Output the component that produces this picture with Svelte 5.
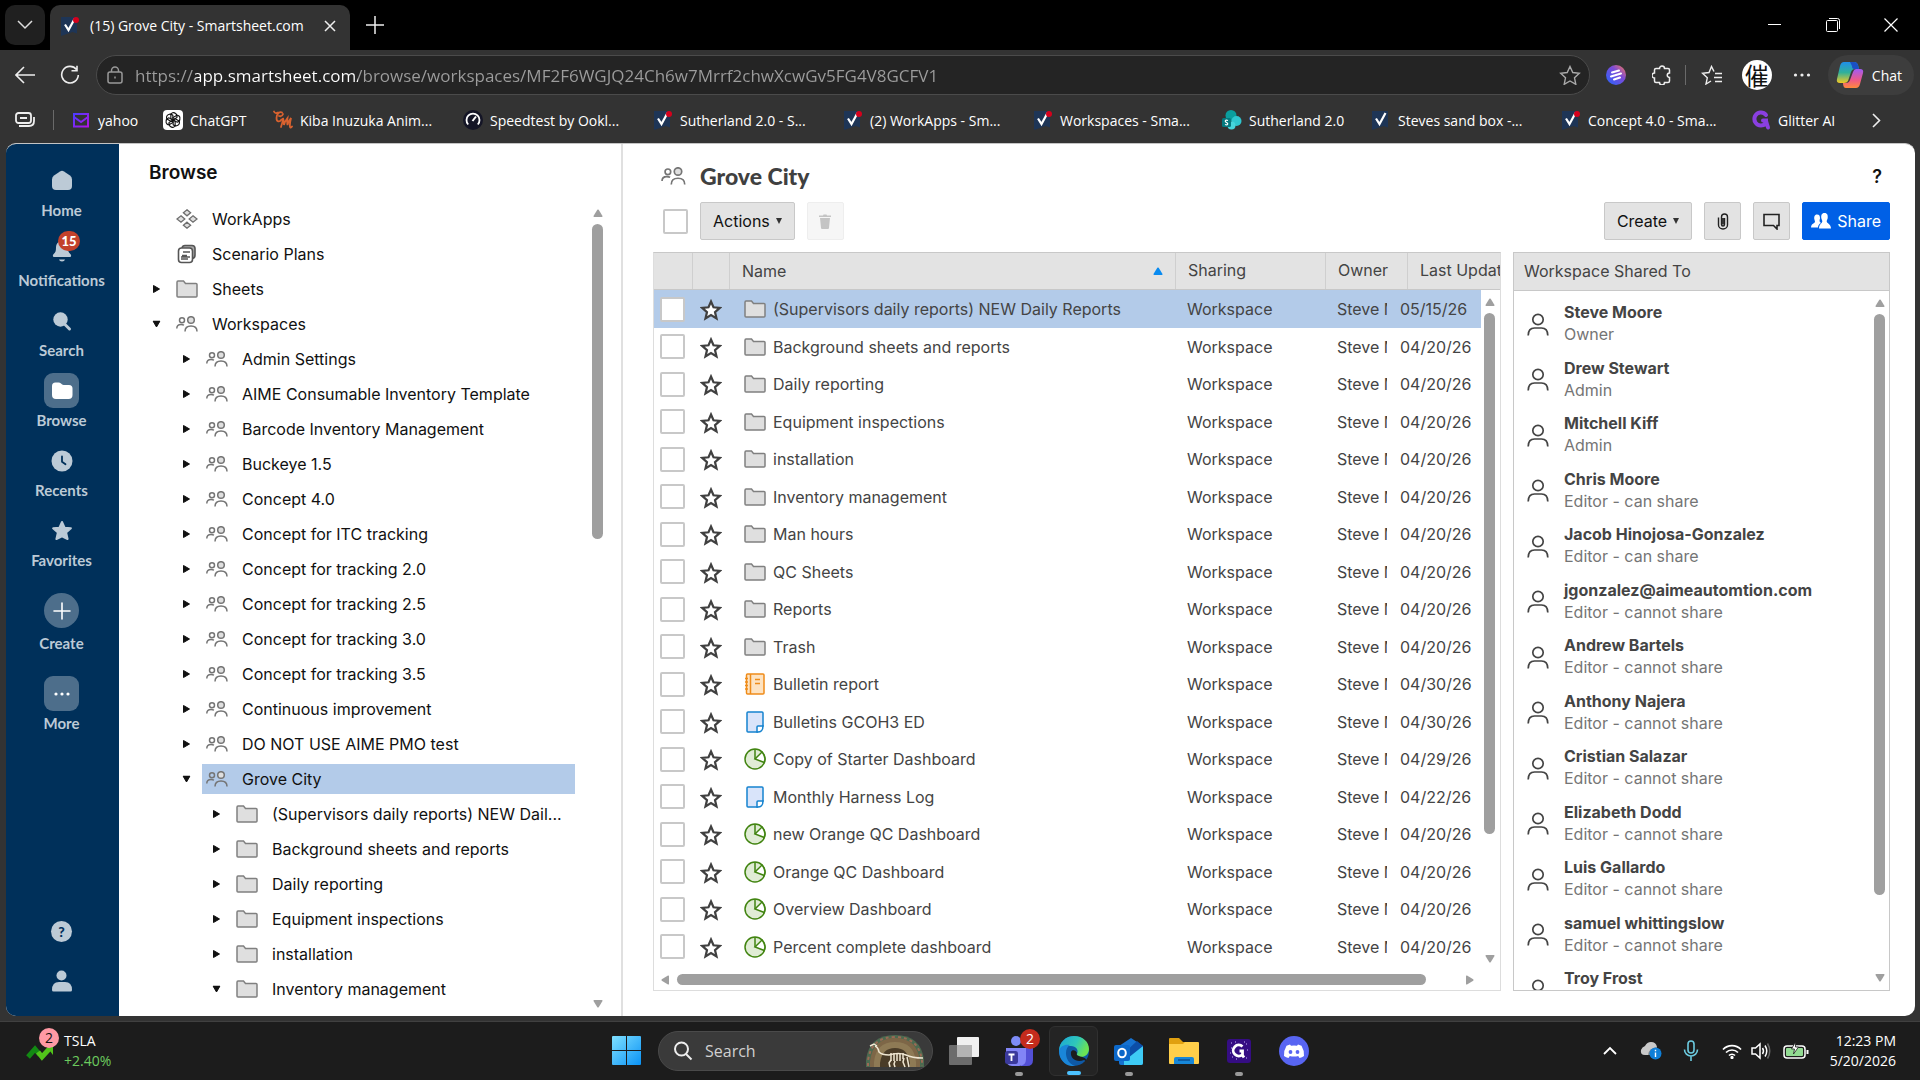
<script lang="ts">
  type TreeRow = { label: string; icon: string; level: number; arrow?: string; selected?: boolean };

  const url =
    "https://app.smartsheet.com/browse/workspaces/MF2F6WGJQ24Ch6w7Mrrf2chwXcwGv5FG4V8GCFV1";

  const bookmarks = [
    { icon: "yahoo", label: "yahoo", width: 92 },
    { icon: "chatgpt", label: "ChatGPT", width: 110 },
    { icon: "cm", label: "Kiba Inuzuka Anim...", width: 190 },
    { icon: "speed", label: "Speedtest by Ookl...", width: 190 },
    { icon: "sheetDot", label: "Sutherland 2.0 - S...", width: 190 },
    { icon: "sheetDot", label: "(2) WorkApps - Sm...", width: 190 },
    { icon: "sheetDot", label: "Workspaces - Sma...", width: 189 },
    { icon: "sharepoint", label: "Sutherland 2.0", width: 149 },
    { icon: "sheetTab", label: "Steves sand box -...", width: 190 },
    { icon: "sheetDot", label: "Concept 4.0 - Sma...", width: 190 },
    { icon: "glitter", label: "Glitter AI", width: 90 },
  ];

  const nav = [
    { icon: "home", label: "Home" },
    { icon: "bell", label: "Notifications", badge: 15 },
    { icon: "search", label: "Search" },
    { icon: "browse", label: "Browse", active: true },
    { icon: "recents", label: "Recents" },
    { icon: "favorites", label: "Favorites" },
  ];

  const workspaces = (names: string[]): TreeRow[] =>
    names.map((label) => ({ label, icon: "people", level: 1, arrow: "right" }));

  const folders = (names: string[]): TreeRow[] =>
    names.map((label) => ({ label, icon: "folder", level: 2, arrow: "right" }));

  const tree: TreeRow[] = [
    { label: "WorkApps", icon: "workapps", level: 0 },
    { label: "Scenario Plans", icon: "plans", level: 0 },
    { label: "Sheets", icon: "folder", level: 0, arrow: "right" },
    { label: "Workspaces", icon: "people", level: 0, arrow: "down" },
    ...workspaces([
      "Admin Settings",
      "AIME Consumable Inventory Template",
      "Barcode Inventory Management",
      "Buckeye 1.5",
      "Concept 4.0",
      "Concept for ITC tracking",
      "Concept for tracking 2.0",
      "Concept for tracking 2.5",
      "Concept for tracking 3.0",
      "Concept for tracking 3.5",
      "Continuous improvement",
      "DO NOT USE AIME PMO test",
    ]),
    { label: "Grove City", icon: "people", level: 1, arrow: "down", selected: true },
    ...folders([
      "(Supervisors daily reports) NEW Dail...",
      "Background sheets and reports",
      "Daily reporting",
      "Equipment inspections",
      "installation",
    ]),
    { label: "Inventory management", icon: "folder", level: 2, arrow: "down" },
  ];

  const items = [
    { name: "(Supervisors daily reports) NEW Daily Reports", icon: "folder", date: "05/15/26" },
    { name: "Background sheets and reports", icon: "folder", date: "04/20/26" },
    { name: "Daily reporting", icon: "folder", date: "04/20/26" },
    { name: "Equipment inspections", icon: "folder", date: "04/20/26" },
    { name: "installation", icon: "folder", date: "04/20/26" },
    { name: "Inventory management", icon: "folder", date: "04/20/26" },
    { name: "Man hours", icon: "folder", date: "04/20/26" },
    { name: "QC Sheets", icon: "folder", date: "04/20/26" },
    { name: "Reports", icon: "folder", date: "04/20/26" },
    { name: "Trash", icon: "folder", date: "04/20/26" },
    { name: "Bulletin report", icon: "report", date: "04/30/26" },
    { name: "Bulletins GCOH3 ED", icon: "sheet", date: "04/30/26" },
    { name: "Copy of Starter Dashboard", icon: "dashboard", date: "04/29/26" },
    { name: "Monthly Harness Log", icon: "sheet", date: "04/22/26" },
    { name: "new Orange QC Dashboard", icon: "dashboard", date: "04/20/26" },
    { name: "Orange QC Dashboard", icon: "dashboard", date: "04/20/26" },
    { name: "Overview Dashboard", icon: "dashboard", date: "04/20/26" },
    { name: "Percent complete dashboard", icon: "dashboard", date: "04/20/26" },
  ];

  const people = [
    { name: "Steve Moore", role: "Owner" },
    { name: "Drew Stewart", role: "Admin" },
    { name: "Mitchell Kiff", role: "Admin" },
    { name: "Chris Moore", role: "Editor - can share" },
    { name: "Jacob Hinojosa-Gonzalez", role: "Editor - can share" },
    { name: "jgonzalez@aimeautomtion.com", role: "Editor - cannot share" },
    { name: "Andrew Bartels", role: "Editor - cannot share" },
    { name: "Anthony Najera", role: "Editor - cannot share" },
    { name: "Cristian Salazar", role: "Editor - cannot share" },
    { name: "Elizabeth Dodd", role: "Editor - cannot share" },
    { name: "Luis Gallardo", role: "Editor - cannot share" },
    { name: "samuel whittingslow", role: "Editor - cannot share" },
    { name: "Troy Frost", role: "" },
  ];

  const apps = [
    { icon: "taskview", label: "Task view" },
    { icon: "teams", label: "Teams", badge: 2, running: true },
    { icon: "edge", label: "Edge", active: true },
    { icon: "outlook", label: "Outlook", running: true },
    { icon: "explorer", label: "File Explorer" },
    { icon: "glitterApp", label: "Glitter AI", running: true },
    { icon: "discord", label: "Discord" },
  ];
</script>

{#snippet glyph(name: string)}
  {#if name === "sheetDot" || name === "sheetTab"}
    <svg width="20" height="20" viewBox="0 0 20 20">
      <path d="M1 1h16v16.500L12.500 16 1 20z" fill="#1e3556" />
      <path d="M5 8.500 8.500 14 14.500 3" fill="none" stroke="#fff" stroke-width="2.200" />
      {#if name === "sheetDot"}<circle cx="16" cy="4" r="3" fill="#d6001c" />{/if}
    </svg>
  {:else if name === "yahoo"}
    <svg width="20" height="20" viewBox="0 0 20 20" fill="none" stroke-width="2">
      <defs>
        <linearGradient id="yh" x1="0" y1="0" x2="1" y2="1">
          <stop offset="0" stop-color="#4d3bff" />
          <stop offset="1" stop-color="#b312e6" />
        </linearGradient>
      </defs>
      <path d="M3 4h14v12.500H3zM3 7l7 5 7-5" stroke="url(#yh)" />
    </svg>
  {:else if name === "chatgpt"}
    <svg width="20" height="20" viewBox="0 0 20 20">
      <rect width="20" height="20" rx="4" fill="#fff" />
      <g fill="none" stroke="#111" stroke-width="1.100">
        {#each [0, 60, 120, 180, 240, 300] as a}
          <path d="M7.500 5a3 3 0 0 1 5-1.500q2 1 1.500 4L10 10V7.500l3.500-2" transform="rotate({a} 10 10)" />
        {/each}
      </g>
    </svg>
  {:else if name === "cm"}
    <svg width="20" height="20" viewBox="0 0 20 20" fill="none" stroke="#d9622f" stroke-width="1.800" stroke-linecap="round">
      <path d="M1 1.500Q2 4 5 2.500M9 2.500C7 1 3.500 4 3.500 8s3 4.500 5 1.500M6 6q3 1 4-2" />
      <path d="M8 17q1.500-4 2-9 1 4 1 7 1-4 3.500-7-.5 4 0 7 1-4 3.500-7-1.500 6-1 9 .5 1.500 2-.5" />
    </svg>
  {:else if name === "speed"}
    <svg width="20" height="20" viewBox="0 0 20 20" fill="none">
      <circle cx="10" cy="10" r="10" fill="#141526" />
      <path d="M5.200 14.500a6.500 6.500 0 1 1 9.600 0" stroke="#fff" stroke-width="1.800" />
      <path d="m9.500 11 3.500-4.500" stroke="#fff" stroke-width="2" />
    </svg>
  {:else if name === "sharepoint"}
    <svg width="20" height="20" viewBox="0 0 20 20">
      <circle cx="9" cy="5.500" r="5.500" fill="#0a9e9e" />
      <circle cx="14.500" cy="11" r="5" fill="#2fc6cf" />
      <circle cx="9.500" cy="15.500" r="4" fill="#46d5dc" />
      <rect x="0" y="8" width="9" height="9" rx="1.500" fill="#05797f" />
      <path d="M6 10.500c-3-1-3.500 1-1.500 2s1.500 3-1.500 2" fill="none" stroke="#fff" stroke-width="1.200" />
    </svg>
  {:else if name === "glitter"}
    <svg width="20" height="20" viewBox="0 0 20 20" fill="none" stroke="#8a3fe0" stroke-width="4" stroke-linecap="round">
      <path d="M15 5A6.500 6.500 0 1 0 10 15.500c3.500 0 5-2 5-5h-3M15 11l2 6.500" />
    </svg>
  {:else if name === "home"}
    <svg width="22" height="22" viewBox="0 0 22 22" fill="currentColor">
      <path d="M9 1.500q2-1.300 4 0l6 4q2 1.500 2 4v6.500q0 4-4 4H5q-4 0-4-4V9.500q0-2.500 2-4z" />
    </svg>
  {:else if name === "bell"}
    <svg width="22" height="24" viewBox="0 0 22 24" fill="currentColor">
      <path d="M11 2c4 0 6 3 6 6.500 0 3.500.5 5 2.300 6.500 1.500 1.400.9 3-.8 3h-15c-1.700 0-2.300-1.600-.8-3C4.500 13.500 5 12 5 8.500 5 5 7 2 11 2z" />
      <path d="M8 20.500h6q-.5 2-3 2t-3-2z" />
    </svg>
  {:else if name === "search"}
    <svg width="22" height="22" viewBox="0 0 22 22">
      <circle cx="9.500" cy="9.500" r="7.200" fill="currentColor" />
      <path d="m13.500 14 5 5" stroke="currentColor" stroke-width="3" stroke-linecap="round" />
    </svg>
  {:else if name === "browse"}
    <svg width="22" height="22" viewBox="0 0 22 22" fill="#fff">
      <path d="M1 6q0-3.500 3.500-3.500h3q1.500 0 2.500 1T12.500 5H18q3.500 0 3.500 3.500v6.500q0 4-4 4H5q-4 0-4-4z" />
    </svg>
  {:else if name === "recents"}
    <svg width="22" height="22" viewBox="0 0 22 22" fill="none">
      <circle cx="11" cy="11" r="10.500" fill="currentColor" />
      <path d="M11 6.500v5.200l3.500 2.500" stroke="#00305a" stroke-width="1.800" stroke-linecap="round" />
    </svg>
  {:else if name === "favorites"}
    <svg width="22" height="22" viewBox="0 0 22 22">
      <path d="m11 2 2.600 5.700 6.300.6-4.800 4.300 1.500 6.400-5.600-2.700L5.400 19l1.500-6.400-4.800-4.300 6.300-.6z" fill="currentColor" stroke="currentColor" stroke-width="2" stroke-linejoin="round" />
    </svg>
  {:else if name === "folder"}
    <svg width="22" height="18" viewBox="0 0 22 18">
      <path d="M1 2.200Q1 1 2 1h5.500l2 2.500H20q1 0 1 1V16q0 1-1 1H2q-1 0-1-1z" fill="#dfdfdf" stroke="#808080" stroke-width="1.500" />
    </svg>
  {:else if name === "people"}
    <svg class="people" width="22" height="16" viewBox="0 0 22 16" fill="none" stroke="#757575" stroke-width="1.500">
      <circle cx="6" cy="4.300" r="2.500" />
      <circle cx="15" cy="4" r="3.300" fill="#dfdfdf" />
      <path d="M.8 12.500c0-3 2-4 4.200-4 1 0 2 .2 3 .7M9 15.500c0-3.800 2-5.500 6-5.500s6 1.700 6 5.500" />
    </svg>
  {:else if name === "workapps"}
    <svg width="22" height="20" viewBox="0 0 22 20" fill="#dfdfdf" stroke="#6f6f6f" stroke-width="1.300">
      <path d="m11 .8 3.600 3L11 6.800l-3.600-3zM5 6.800l3.800 3.200L5 13.200 1 10zM17 6.800l4 3.200-4 3.200-3.800-3.200zM11 13.200l3.600 3-3.600 3-3.600-3z" />
    </svg>
  {:else if name === "plans"}
    <svg width="22" height="20" viewBox="0 0 22 20" fill="none" stroke="#555" stroke-width="1.600">
      <path d="M6 4q.5-2.500 3-2.500h7q3 0 3 3V11q0 3-2.500 3.500" fill="#aaa" />
      <rect x="2.500" y="4" width="14" height="14.500" rx="3" fill="#fff" />
      <path d="M7 8h7M6 11.500h5M5 15h7M5 13h9" stroke-width="1.500" />
    </svg>
  {:else if name === "report"}
    <svg width="22" height="22" viewBox="0 0 22 22" fill="none" stroke="#ef8c1a" stroke-width="1.500">
      <rect x="2.500" y="1" width="17.500" height="20" rx="1" fill="#fde3c2" />
      <path d="M6.500 1v20M11 6.500h5M11 10.500h5M1 5.500h3M1 9h3M1 12.500h3M1 16h3" />
    </svg>
  {:else if name === "sheet"}
    <svg width="22" height="22" viewBox="0 0 22 22" stroke="#1683cf" stroke-width="1.500">
      <path d="M3 2q0-1 1-1h14q1 0 1 1v13l-5.500 6H4q-1 0-1-1z" fill="#d9e4fa" />
      <path d="M19 15h-5q-1 0-1 1v5q6 .5 6-6z" fill="#fff" />
    </svg>
  {:else if name === "dashboard"}
    <svg width="22" height="22" viewBox="0 0 22 22" stroke="#418410" stroke-width="1.500">
      <circle cx="11" cy="11" r="10" fill="#e0ecd5" />
      <path d="M11 11l7-7q2.500 3 3 7l-.8 3.500z" fill="#fff" />
      <path d="M11 1v10" fill="none" />
    </svg>
  {:else if name === "taskview"}
    <svg width="30" height="30" viewBox="0 0 30 30">
      <rect x="0" y="9" width="23" height="20" rx="1" fill="#6c6c6c" />
      <rect x="8" y="1" width="22" height="20" rx="1" fill="#f0f0f0" />
      <rect x="8" y="9" width="15" height="12" fill="#b4b4b4" />
    </svg>
  {:else if name === "teams"}
    <svg width="30" height="30" viewBox="0 0 30 30">
      <circle cx="12" cy="5" r="5" fill="#7e8cf7" />
      <path d="M17 12h12v12q0 6-6 6h-6z" fill="#5350d6" />
      <path d="M2 12h20v11q0 7-7 7H8q-6 0-6-7z" fill="#8285f6" />
      <rect x="1" y="15" width="13" height="13" rx="2.500" fill="#3b3a9c" />
      <path d="M4.500 18.500h6M7.500 18.500v6.500" stroke="#fff" stroke-width="1.800" />
    </svg>
  {:else if name === "edge"}
    <svg width="30" height="30" viewBox="0 0 30 30">
      <defs>
        <linearGradient id="eg" x1="0" y1="0" x2="1" y2=".4">
          <stop offset="0" stop-color="#1ba5d8" />
          <stop offset=".6" stop-color="#2fc7ba" />
          <stop offset="1" stop-color="#6be354" />
        </linearGradient>
      </defs>
      <circle cx="15" cy="15" r="15" fill="#0f59a5" />
      <path d="M0 15C0 6 7 0 15 0c9 0 15 6 15 13 0 5-4 8-8 8-3 0-5-1-4-3 2-4-1-8-6-8-6 0-12 2-12 8z" fill="url(#eg)" />
      <path d="M0 15c1-5 6-7 11-6-6 3-6 17 5 21C7 31 0 24 0 15z" fill="#1a86d9" />
      <path d="M12 16c-1 7 6 11 13 8l2 1c1-3-4-4-7-5-2-.5-3-2-2-3-1-3-5-4-6-1z" fill="#1c1c1c" />
    </svg>
  {:else if name === "outlook"}
    <svg width="30" height="30" viewBox="0 0 30 30">
      <path d="M5 10 17 2l12 8v17q0 2-2 2H7q-2 0-2-2z" fill="#1672d0" />
      <path d="m10 20 19-10v17q0 2-2 2H10z" fill="#3ecbf5" />
      <path d="m9 18 14-13 6 5-15 12z" fill="#0c4ea8" />
      <rect x="0" y="9" width="16" height="16" rx="2" fill="#0c68c9" />
      <ellipse cx="8" cy="17" rx="3.800" ry="4.300" fill="none" stroke="#fff" stroke-width="2" />
    </svg>
  {:else if name === "explorer"}
    <svg width="30" height="30" viewBox="0 0 30 30">
      <path d="M0 3q0-1 1-1h9l4 4h15v12H0z" fill="#e0a010" />
      <path d="M0 8h14l2-2h13q1 0 1 1v20q0 1-1 1H1q-1 0-1-1z" fill="#ffcf4a" />
      <path d="M5 28v-5q0-2 2-2h16q2 0 2 2v5z" fill="#1787d9" />
      <path d="M9 24h12" stroke="#0d4f92" stroke-width="1.500" />
    </svg>
  {:else if name === "glitterApp"}
    <svg width="24" height="24" viewBox="0 0 24 24" fill="none">
      <rect width="24" height="24" rx="3" fill="#350d83" />
      <path d="M15.500 7.500a5.500 5.500 0 1 0 0 8v-3.500h-3M15 15.500l2 3" stroke="#fff" stroke-width="2.800" />
      <path d="M4 4h1M8 3h1M19 5h1M4 9h1M20 11h1M5 18h1M9 20h1M19 19h1M17 3h1M3 14h1" stroke="#c9b5ff" stroke-width="1.200" />
    </svg>
  {:else if name === "discord"}
    <svg width="30" height="30" viewBox="0 0 30 30">
      <circle cx="15" cy="15" r="15" fill="#5865f2" />
      <path d="m11 8.500 1 1.200q3-.6 6 0l1-1.200 3.500 1.300q3 5 2.500 10.200-2 1.500-4.500 2l-1.300-2q-4.200 1-8.400 0L9.500 22Q7 21.500 5 20q-.5-5.200 2.500-10.200z" fill="#fff" />
      <ellipse cx="11.500" cy="16" rx="1.900" ry="2.100" fill="#5865f2" />
      <ellipse cx="18.500" cy="16" rx="1.900" ry="2.100" fill="#5865f2" />
    </svg>
  {/if}
{/snippet}

{#snippet triangle(dir: string)}
  <svg class="tri {dir}" width="10" height="8" viewBox="0 0 10 8">
    <path d="M4.300.8Q5 0 5.700.8L9.500 7q.3 1-.8 1H1.300q-1.100 0-.8-1z" fill="currentColor" />
  </svg>
{/snippet}

{#snippet scrollbar(size: number)}
  <div class="vscroll">
    {@render triangle("up")}
    <div class="track"><div class="thumb" style="height: {size}%"></div></div>
    {@render triangle("down")}
  </div>
{/snippet}

<div class="window">
  <div class="tabstrip">
    <button class="tab-search" aria-label="Search tabs">
      <svg width="16" height="10" viewBox="0 0 16 10"><path d="m1 1 7 7 7-7" fill="none" stroke="#ddd" stroke-width="1.500" /></svg>
    </button>
    <div class="tab">
      {@render glyph("sheetDot")}
      <span class="tab-title">(15) Grove City - Smartsheet.com</span>
      <button aria-label="Close tab">
        <svg width="12" height="12" viewBox="0 0 12 12"><path d="m1 1 10 10M11 1 1 11" stroke="#eee" stroke-width="1.500" /></svg>
      </button>
    </div>
    <button class="new-tab" aria-label="New tab">
      <svg width="18" height="18" viewBox="0 0 18 18"><path d="M9 0v18M0 9h18" stroke="#eee" stroke-width="1.500" /></svg>
    </button>
    <div class="window-controls">
      <button aria-label="Minimize">
        <svg width="14" height="14" viewBox="0 0 14 14"><path d="M0 6.500h13" stroke="#fff" /></svg>
      </button>
      <button aria-label="Restore">
        <svg width="14" height="14" viewBox="0 0 14 14" fill="none" stroke="#fff">
          <rect x=".5" y="2.500" width="11" height="11" rx="1" />
          <path d="M3 .5h8.500q2 0 2 2V11" />
        </svg>
      </button>
      <button aria-label="Close">
        <svg width="14" height="14" viewBox="0 0 14 14"><path d="m.5.5 13 13m0-13-13 13" stroke="#fff" stroke-width="1.200" /></svg>
      </button>
    </div>
  </div>

  <div class="toolbar">
    <button class="tool" aria-label="Back">
      <svg width="20" height="18" viewBox="0 0 20 18"><path d="M20 9H1M9 1 1 9l8 8" fill="none" stroke="#eee" stroke-width="1.600" /></svg>
    </button>
    <button class="tool reload" aria-label="Refresh">
      <svg width="20" height="20" viewBox="0 0 20 20" fill="none" stroke="#eee" stroke-width="1.600"><path d="M16.500 4.500A8.300 8.300 0 1 0 18.300 10M17 .8v5h-5.500" /></svg>
    </button>
    <label class="address">
      <svg width="16" height="18" viewBox="0 0 16 18" fill="none" stroke="#999" stroke-width="1.500">
        <rect x="1" y="6" width="14" height="11" rx="2" />
        <path d="M4.500 6V4.500a3.500 3.500 0 0 1 7 0V6M8 10.500v2" />
      </svg>
      <input type="text" value={url} aria-label="Address" spellcheck="false" />
      <svg width="22" height="20" viewBox="0 0 22 20"><path d="m11 1.500 2.800 6 6.500.8-4.800 4.500 1.300 6.500L11 16l-5.800 3.300 1.300-6.500L1.700 8.300l6.500-.8z" fill="none" stroke="#aaa" stroke-width="1.400" /></svg>
    </label>
    <button class="tool ext" aria-label="Extension">
      <svg width="20" height="20" viewBox="0 0 20 20">
        <defs>
          <linearGradient id="ex" x1="1" y1="0" x2="0" y2="1">
            <stop offset="0" stop-color="#ff7a52" />
            <stop offset=".4" stop-color="#7b4bd8" />
            <stop offset="1" stop-color="#2465ff" />
          </linearGradient>
        </defs>
        <circle cx="10" cy="10" r="10" fill="url(#ex)" />
        <path d="m6 7.500 7-2M5 11.500l10-3M8 14.500l6-2" stroke="#fff" stroke-width="2" stroke-linecap="round" />
      </svg>
    </button>
    <button class="tool" aria-label="Extensions">
      <svg width="20" height="20" viewBox="0 0 20 20"><path d="M4 3.500h3.500a2.500 2.500 0 0 1 5 0H16q1.500 0 1.500 1.500v3a2.200 2.200 0 0 0 0 4.500V16q0 1.500-1.500 1.500h-3.500a2.500 2.500 0 0 1-5 0H4q-1.500 0-1.500-1.500v-3a2.500 2.500 0 0 1 0-5V5q0-1.500 1.500-1.500z" fill="none" stroke="#eee" stroke-width="1.500" /></svg>
    </button>
    <span class="rule"></span>
    <button class="tool" aria-label="Favorites">
      <svg width="22" height="20" viewBox="0 0 22 20" fill="none" stroke="#eee" stroke-width="1.400"><path d="M13 6.500 10.500 1.500l-2.500 6-6.500.8 4.800 4.500L5 19l5-3M14 8.500h7M13 12.500h8M14 16.500h7" /></svg>
    </button>
    <button class="avatar" aria-label="Profile">催</button>
    <button class="tool" aria-label="Settings and more">
      <svg width="18" height="4" viewBox="0 0 18 4" fill="#eee"><circle cx="2.500" cy="2" r="1.600" /><circle cx="9" cy="2" r="1.600" /><circle cx="15.500" cy="2" r="1.600" /></svg>
    </button>
    <button class="chat">
      <svg width="28" height="28" viewBox="0 0 28 28">
        <defs>
          <linearGradient id="ca" x1="0" y1="0" x2="0" y2="1">
            <stop offset="0" stop-color="#1f8fea" />
            <stop offset=".5" stop-color="#30b09a" />
            <stop offset="1" stop-color="#f4ca23" />
          </linearGradient>
          <linearGradient id="cb" x1="0" y1="0" x2="0" y2="1">
            <stop offset="0" stop-color="#a05bf5" />
            <stop offset=".6" stop-color="#f05a85" />
            <stop offset="1" stop-color="#ff8a3c" />
          </linearGradient>
        </defs>
        <path d="M8 1h10q3 0 4 3l1 4h-4q-3 0-4 3l-3 9q-1 2-4 2H4q-4 0-3-4L4 5q1-4 4-4z" fill="url(#ca)" />
        <path d="M14 1h4q3 0 4 3l1 4h-5q-2 0-2-3z" fill="#1b50c4" />
        <path d="M20 8h4q4 0 3 4l-3 11q-1 4-4 4H10q-3 0-3-5h3q3 0 4-3l3-8q1-3 3-3z" fill="url(#cb)" />
      </svg>
      Chat
    </button>
  </div>

  <nav class="bookmarks" aria-label="Bookmarks">
    <button class="tool" aria-label="Workspaces">
      <svg width="20" height="16" viewBox="0 0 20 16" fill="none" stroke="#eee" stroke-width="1.800"><rect x="1" y="1" width="15" height="10" rx="2.500" /><path d="M5 6h7M4 14h10q5 0 5-5V5" /></svg>
    </button>
    <span class="rule"></span>
    {#each bookmarks as mark}
      <a href="#{mark.icon}" style="width: {mark.width}px">
        {@render glyph(mark.icon)}
        <span>{mark.label}</span>
      </a>
    {/each}
    <button class="tool more-marks" aria-label="More bookmarks">
      <svg width="9" height="15" viewBox="0 0 9 15"><path d="m1 1 6.500 6.500L1 14" fill="none" stroke="#eee" stroke-width="1.600" /></svg>
    </button>
  </nav>

  <div class="app">
    <nav class="rail" aria-label="Main">
      {#each nav as item}
        <a href="#{item.icon}" class="rail-item">
          <span class="rail-icon" class:active={item.active}>
            {@render glyph(item.icon)}
            {#if item.badge}<b class="badge">{item.badge}</b>{/if}
          </span>
          {item.label}
        </a>
      {/each}
      <button class="rail-item create">
        <span class="rail-icon round">
          <svg width="18" height="18" viewBox="0 0 18 18"><path d="M9 1v16M1 9h16" stroke="#fff" stroke-width="1.600" stroke-linecap="round" /></svg>
        </span>
        Create
      </button>
      <button class="rail-item">
        <span class="rail-icon active">
          <svg width="18" height="4" viewBox="0 0 18 4" fill="#fff"><circle cx="3" cy="2" r="1.600" /><circle cx="9" cy="2" r="1.600" /><circle cx="15" cy="2" r="1.600" /></svg>
        </span>
        More
      </button>
      <div class="rail-foot">
        <button aria-label="Help"><span class="help-dot">?</span></button>
        <button aria-label="Account">
          <svg width="22" height="22" viewBox="0 0 22 22" fill="currentColor">
            <circle cx="10.500" cy="5.500" r="5" />
            <path d="M1 20q0-8 7-8h6q7 0 7 8 0 1.500-1.500 1.500h-17Q1 21.500 1 20z" />
          </svg>
        </button>
      </div>
    </nav>

    <aside class="sidebar">
      <h2>Browse</h2>
      <div class="tree-area">
        <ul class="tree">
          {#each tree as row}
            <li class="level{row.level}">
              <span class="twisty">
                {#if row.arrow}
                  <button class={row.arrow} aria-label="Toggle {row.label}">
                    <svg width="7" height="8" viewBox="0 0 7 8"><path d="M.5.5v7L6.500 4z" fill="#111" stroke="#111" stroke-linejoin="round" /></svg>
                  </button>
                {/if}
              </span>
              <a href="#{row.icon}" class:selected={row.selected}>
                {@render glyph(row.icon)}
                <span>{row.label}</span>
              </a>
            </li>
          {/each}
        </ul>
        {@render scrollbar(41)}
      </div>
    </aside>

    <main>
      <header class="title">
        {@render glyph("people")}
        <h1>Grove City</h1>
        <button class="help" aria-label="Help">?</button>
      </header>

      <div class="actions">
        <input type="checkbox" aria-label="Select all" />
        <button class="btn menu">Actions <i></i></button>
        <button class="btn square" disabled aria-label="Delete">
          <svg width="12" height="15" viewBox="0 0 12 15" fill="#c4c4c4"><path d="M0 1.500h4L4.500.5h3l.5 1h4V3H0zM1 4h10l-1 10q-.2 1-1 1H3q-.8 0-1-1z" /></svg>
        </button>
        <button class="btn menu create-btn">Create <i></i></button>
        <button class="btn square" aria-label="Attachments">
          <svg width="12" height="17" viewBox="0 0 12 17" fill="none" stroke="#222" stroke-width="1.400"><path d="M6 5v6.500M1.500 4.500V12a4.500 4 0 0 0 9 0V4a3 3 0 0 0-6 0v7.500a1.500 1.500 0 0 0 3 0V5" /></svg>
        </button>
        <button class="btn square" aria-label="Comments">
          <svg width="17" height="17" viewBox="0 0 17 17" fill="none" stroke="#222" stroke-width="1.600"><path d="M1 1.500h15v11h-2V16l-3.500-3.500H1z" /></svg>
        </button>
        <button class="btn share">
          <svg width="20" height="16" viewBox="0 0 20 16" fill="#fff">
            <path d="M6 1.500C3.500 1.500 3 4 3.300 6c.2 1.300.7 2 .7 2.800C4 10.500 0 10.500 0 14.500h7q0-3 3-4.500C8 9 8.500 7 9 5.500 9 3 8.500 1.500 6 1.500z" />
            <path d="M13.500 0c-3 0-3.500 2.500-3.200 5 .2 1.500 1 2.300 1 3.300C11.300 10.500 8 11 8 15.500h12c0-4.500-4.300-5-4.300-7.200 0-1 .8-1.800 1-3.300.3-2.500-.2-5-3.200-5z" />
          </svg>
          Share
        </button>
      </div>

      <div class="content">
        <section class="list">
          <table>
            <thead>
              <tr>
                <th aria-label="Select"></th>
                <th aria-label="Favorite"></th>
                <th class="sorted">Name {@render triangle("up")}</th>
                <th>Sharing</th>
                <th>Owner</th>
                <th>Last Updated</th>
              </tr>
            </thead>
            <tbody>
              {#each items as item, i}
                <tr class:selected={i === 0}>
                  <td><input type="checkbox" aria-label="Select {item.name}" /></td>
                  <td>
                    <button class="star" aria-label="Favorite {item.name}">
                      <svg width="22" height="22" viewBox="0 0 22 22"><path d="m11 2.500 2.500 5.800 6.300.6-4.800 4.200 1.500 6.300L11 16l-5.500 3.400L7 13.100 2.200 8.900l6.300-.6z" fill="#fff" stroke="#404040" stroke-width="2.200" /></svg>
                    </button>
                  </td>
                  <td class="name">{@render glyph(item.icon)}<span>{item.name}</span></td>
                  <td class="sharing">Workspace</td>
                  <td class="owner"><span>Steve M</span></td>
                  <td class="date">{item.date}</td>
                </tr>
              {/each}
            </tbody>
          </table>
          {@render scrollbar(82)}
          <div class="hscroll">
            {@render triangle("left")}
            <div class="track"><div class="thumb" style="width: 96%"></div></div>
            {@render triangle("right")}
          </div>
        </section>

        <section class="shared">
          <h3>Workspace Shared To</h3>
          <div class="shared-body">
            <ul>
              {#each people as person}
                <li>
                  <svg width="22" height="23" viewBox="0 0 22 23" fill="none" stroke="#444" stroke-width="1.700">
                    <circle cx="11" cy="6.500" r="5.200" />
                    <path d="M1.200 22.500c0-5 2.500-7.500 6.300-7.500h7c3.800 0 6.300 2.500 6.300 7.500" />
                  </svg>
                  <div>
                    <strong>{person.name}</strong>
                    <span>{person.role}</span>
                  </div>
                </li>
              {/each}
            </ul>
            {@render scrollbar(89)}
          </div>
        </section>
      </div>
    </main>
  </div>

  <footer class="taskbar">
    <button class="stock">
      <span class="stock-icon">
        <svg width="28" height="18" viewBox="0 0 28 18">
          <path d="m2 14 7-8 5 6" fill="none" stroke="#138a13" stroke-width="5" />
          <path d="m12 9 4 5 9-10" fill="none" stroke="#52c41a" stroke-width="5" />
          <path d="M18 0h9v12z" fill="#52c41a" />
        </svg>
        <span class="stock-badge">2</span>
      </span>
      <span class="stock-text">TSLA<em>+2.40%</em></span>
    </button>

    <div class="dock">
      <button class="slot" aria-label="Start">
        <svg width="30" height="30" viewBox="0 0 30 30">
          <defs>
            <linearGradient id="wn" x1="0" y1="0" x2="1" y2="1">
              <stop offset="0" stop-color="#7fe0ff" />
              <stop offset="1" stop-color="#0a92f5" />
            </linearGradient>
          </defs>
          <path d="M1 0h13v14H0V1q0-1 1-1zM15 0h13q1 0 1 1v13H15zM0 15h14v14H1q-1 0-1-1zM15 15h14v13q0 1-1 1H15z" fill="url(#wn)" />
        </svg>
      </button>
      <label class="task-search">
        <svg width="20" height="20" viewBox="0 0 20 20" fill="none" stroke="#eee" stroke-width="2"><circle cx="8.500" cy="8" r="6.500" /><path d="m13 13 5.500 5.500" /></svg>
        <input type="text" placeholder="Search" aria-label="Search" />
        <svg width="60" height="34" viewBox="0 0 60 34" fill="none">
          <path d="M1 33V26Q4 1 30 1t29 25v7z" fill="#4c6a50" />
          <path d="M3 32V27Q6 3 30 3t27 24v5" stroke="#9b6a55" stroke-dasharray="3 3" stroke-width="2" />
          <path d="M5 33V27Q8 4 30 4t25 23v6z" fill="#7d6647" />
          <path d="M9 33V28Q11 8 30 8t21 20v5z" fill="#8e7a55" />
          <path d="M15 33V29Q17 14 30 14t15 15v4z" fill="#4a3c28" />
          <g stroke="#efe6d2" stroke-width="1.500">
            <path d="m5 12 4-2 3 2M10 12q3 1 4 6 3 3 10 3 10-3 17 0 6 3 17 3" />
            <path d="M26 19v8M29 19v8M32 19v8M35 19v8M38 19v6" />
            <path d="m26 26-2 3 1 4M30 27l-1 3 1 3M39 24l-1 4 2 5M42 23l1 5 1 5" />
          </g>
        </svg>
      </label>
      {#each apps as app}
        <button class="slot" class:current={app.active} class:running={app.running} aria-label={app.label}>
          {@render glyph(app.icon)}
          {#if app.badge}<span class="app-badge">{app.badge}</span>{/if}
        </button>
      {/each}
    </div>

    <div class="tray">
      <svg width="14" height="9" viewBox="0 0 14 9"><path d="m1 8 6-6 6 6" fill="none" stroke="#fff" stroke-width="1.800" /></svg>
      <svg class="drive" width="22" height="20" viewBox="0 0 22 20">
        <path d="M5 14Q0 14 1 9q1-3 4-4 2-4 6-4 5 0 6 5v8z" fill="#c9c9c9" />
        <path d="M8 14q0-6 9-8v8z" fill="#858585" />
        <circle cx="15.500" cy="12.500" r="6" fill="#0f7fd8" />
        <path d="M15.500 11.500v4.500M15.500 8.800v1.500" stroke="#fff" stroke-width="1.400" />
      </svg>
      <svg class="mic" width="16" height="22" viewBox="0 0 16 22" fill="none" stroke="#6ccbe0" stroke-width="1.600"><rect x="5" y="1" width="6" height="12" rx="3" /><path d="M1.500 9.500a6.500 6.500 0 0 0 13 0M8 16v5" /></svg>
      <svg width="20" height="16" viewBox="0 0 20 16" fill="none" stroke="#fff" stroke-width="1.700"><path d="M1 6.500a12.500 12.500 0 0 1 18 0M4 9.500a8.500 8.500 0 0 1 12 0M7 12.500a4.200 4.200 0 0 1 6 0" /><circle cx="10" cy="14.500" r=".8" fill="#fff" /></svg>
      <svg class="volume" width="20" height="18" viewBox="0 0 20 18" fill="none" stroke="#fff" stroke-width="1.500"><path d="M1 6v6h3.500l4.500 4V2L4.500 6z" /><path d="M11.500 6q2 3 0 6M14 3.500q3.500 5.500 0 11" /><path d="M16.500 1.500q4.500 7.500 0 15" stroke="#666" /></svg>
      <svg class="battery" width="26" height="18" viewBox="0 0 26 18" fill="none">
        <rect x="1" y="4" width="21" height="12" rx="3" stroke="#fff" stroke-width="1.500" />
        <rect x="3" y="6" width="17" height="8" rx="1" fill="#93dc93" />
        <path d="M24.500 8v4" stroke="#fff" stroke-width="2" />
        <path d="m12.500 0-4 7h3l-1 5 5-7h-3z" fill="#fff" stroke="#1c1c1c" stroke-width=".8" />
      </svg>
      <time>12:23 PM<span>5/20/2026</span></time>
    </div>
  </footer>
</div>

<style>
  :global(body) {
    margin: 0;
    background: #333;
  }

  :global(*) {
    box-sizing: border-box;
  }

  .window {
    display: flex;
    flex-direction: column;
    height: 100vh;
    overflow: hidden;
    background: #333;
    color: #fff;
    font-family: "Open Sans", "Noto Sans", "Noto Sans CJK SC", sans-serif;
    font-size: 14px;
  }

  button {
    padding: 0;
    border: 0;
    background: none;
    color: inherit;
    font: inherit;
    cursor: pointer;
  }

  a {
    color: inherit;
    text-decoration: none;
  }

  svg {
    display: block;
    flex-shrink: 0;
  }

  ul {
    margin: 0;
    padding: 0;
    list-style: none;
  }

  /* browser chrome */
  .tabstrip {
    display: flex;
    align-items: center;
    flex-shrink: 0;
    height: 50px;
    padding-left: 5px;
    background: #000;
  }

  .tab-search {
    display: grid;
    place-items: center;
    width: 40px;
    height: 40px;
    border-radius: 10px;
    background: #202020;
  }

  .tab {
    display: flex;
    align-items: center;
    gap: 10px;
    width: 300px;
    height: 45px;
    margin: 5px 0 0 5px;
    padding: 0 14px 4px 10px;
    border-radius: 10px 10px 0 0;
    background: #333;
  }

  .tab-title {
    flex: 1;
    white-space: nowrap;
  }

  .new-tab {
    margin-left: 16px;
  }

  .window-controls {
    display: flex;
    margin-left: auto;
  }

  .window-controls button {
    display: grid;
    place-items: center;
    width: 58px;
    height: 40px;
  }

  .toolbar {
    display: flex;
    align-items: center;
    flex-shrink: 0;
    height: 50px;
    padding: 0 6px 0 2px;
  }

  .tool {
    display: grid;
    place-items: center;
    flex-shrink: 0;
    width: 46px;
    height: 40px;
  }

  .reload {
    width: 44px;
  }

  .address {
    display: flex;
    align-items: center;
    flex: 1;
    gap: 12px;
    height: 40px;
    margin-left: 4px;
    padding: 0 8px 0 10px;
    border: 1px solid #4b4b4b;
    border-radius: 20px;
    background: #242424;
  }

  .address input {
    flex: 1;
    min-width: 0;
    padding: 0;
    border: 0;
    outline: 0;
    background: linear-gradient(90deg, #9d9d9d 60px, #fff 60px 223px, #9d9d9d 223px);
    background-clip: text;
    -webkit-background-clip: text;
    color: transparent;
    font: inherit;
    font-size: 17px;
  }

  .ext {
    margin-left: 3px;
  }

  .rule {
    width: 1px;
    height: 20px;
    background: #6a6a6a;
  }

  .toolbar .rule {
    margin-right: 3px;
  }

  .avatar {
    flex-shrink: 0;
    width: 30px;
    height: 30px;
    margin: 0 7px;
    border-radius: 50%;
    background: #fff;
    color: #111;
    font-family: "Noto Sans CJK SC", sans-serif;
    font-size: 24px;
    line-height: 28px;
    overflow: hidden;
  }

  .chat {
    display: flex;
    align-items: center;
    gap: 8px;
    height: 40px;
    margin-left: 3px;
    padding: 0 12px 0 8px;
    border-radius: 20px;
    background: #3d3d3d;
  }

  .bookmarks {
    display: flex;
    align-items: center;
    flex-shrink: 0;
    height: 43px;
    padding: 0 21px 3px 2px;
  }

  .bookmarks .rule {
    margin: 0 17px 0 5px;
  }

  .bookmarks a {
    display: flex;
    align-items: center;
    flex-shrink: 0;
    gap: 7px;
    white-space: nowrap;
  }

  .more-marks {
    margin-left: auto;
  }

  /* app frame */
  .app {
    display: flex;
    flex: 1;
    min-height: 0;
    margin: 0 5px 5px 6px;
    border-top: 1px solid #c4c4c4;
    border-radius: 10px;
    background: #fff;
    color: #111;
    font-family: Inter, sans-serif;
    font-size: 16px;
    overflow: hidden;
  }

  .rail {
    display: flex;
    flex-direction: column;
    flex-shrink: 0;
    width: 113px;
    padding: 19px 2px 0 0;
    background: #00305a;
    color: #bccad6;
    font-family: Lato, sans-serif;
    font-size: 15px;
    font-weight: 700;
  }

  .rail-item {
    display: flex;
    flex-direction: column;
    align-items: center;
    flex-shrink: 0;
    gap: 2px;
    height: 70px;
    line-height: 20px;
  }

  .rail-icon {
    display: grid;
    place-items: center;
    position: relative;
    width: 35px;
    height: 35px;
  }

  .rail-icon.active {
    border-radius: 9px;
    background: #4d6e8b;
  }

  .rail-icon.round {
    border-radius: 50%;
    background: #4d6e8b;
  }

  .badge {
    position: absolute;
    top: -2px;
    left: 14px;
    min-width: 22px;
    height: 20px;
    border-radius: 10px;
    background: #c2412c;
    color: #fff;
    font-size: 13px;
    line-height: 20px;
    text-align: center;
  }

  .rail-item.create {
    gap: 5px;
    height: 83px;
    margin-top: 10px;
  }

  .rail-foot {
    display: flex;
    flex-direction: column;
    align-items: center;
    gap: 28px;
    margin-top: auto;
    padding-bottom: 24px;
  }

  .help-dot {
    display: block;
    width: 21px;
    height: 21px;
    border-radius: 50%;
    background: #bccad6;
    color: #00305a;
    font-size: 14px;
    font-weight: 900;
    line-height: 21px;
    text-align: center;
  }

  .sidebar {
    display: flex;
    flex-direction: column;
    flex-shrink: 0;
    width: 504px;
    padding-right: 18px;
    border-right: 2px solid #e0e0e0;
  }

  h2 {
    margin: 0;
    padding: 13px 0 12px 30px;
    font-size: 19px;
    font-weight: 600;
    line-height: 32px;
  }

  .tree-area {
    display: flex;
    flex: 1;
    min-height: 0;
    gap: 17px;
  }

  .tree {
    flex: 1;
    overflow: hidden;
  }

  .tree li {
    display: flex;
    align-items: center;
    height: 35px;
    padding-left: 27px;
  }

  .tree .level1 {
    padding-left: 57px;
  }

  .tree .level2 {
    padding-left: 87px;
  }

  .twisty {
    display: flex;
    justify-content: center;
    width: 26px;
    padding-right: 5px;
  }

  .down svg:not(.tri) {
    transform: rotate(90deg);
  }

  .tree a {
    display: flex;
    align-items: center;
    flex: 1;
    gap: 14px;
    height: 30px;
    padding-left: 4px;
    white-space: nowrap;
  }

  .selected {
    background: #b3cbe9;
  }

  .tri {
    color: #9f9f9f;
  }

  .tri.down {
    transform: rotate(180deg);
  }

  .tri.left {
    transform: rotate(-90deg);
  }

  .tri.right {
    transform: rotate(90deg);
  }

  .vscroll {
    display: flex;
    flex-direction: column;
    align-items: center;
    width: 11px;
    padding: 8px 0;
  }

  .vscroll .track {
    flex: 1;
    width: 11px;
    margin: 7px 0;
  }

  .thumb {
    height: 11px;
    border-radius: 6px;
    background: #9f9f9f;
  }

  main {
    display: flex;
    flex-direction: column;
    flex: 1;
    min-width: 0;
    padding: 6px 25px 25px 30px;
  }

  .title {
    display: flex;
    align-items: center;
    gap: 14px;
    height: 52px;
    padding-left: 8px;
  }

  .title .people {
    width: 25px;
    height: 18px;
  }

  h1 {
    margin: 0;
    color: #404040;
    font-family: Lato, sans-serif;
    font-size: 23px;
    font-weight: 900;
  }

  .help {
    margin-left: auto;
    padding: 0 8px;
    font-size: 18px;
    font-weight: 600;
  }

  .actions {
    display: flex;
    align-items: center;
    gap: 12px;
    padding-left: 10px;
  }

  .actions input {
    margin-right: -2px;
  }

  input[type="checkbox"] {
    appearance: none;
    display: block;
    width: 25px;
    height: 25px;
    margin: 0;
    border: 2px solid #c8c8c8;
    border-radius: 2px;
    background: #fff;
  }

  .btn {
    display: flex;
    align-items: center;
    justify-content: center;
    height: 38px;
    border: 1px solid #c8c8c8;
    border-radius: 2px;
    background: #e3e3e3;
  }

  .menu {
    gap: 6px;
    padding: 0 12px;
  }

  .menu i {
    border: 3px solid transparent;
    border-top: 6px solid #333;
    border-bottom: 0;
  }

  .create-btn {
    margin-left: auto;
  }

  .square {
    width: 37px;
  }

  .btn:disabled {
    border-color: #eee;
    background: #f6f6f6;
  }

  .share {
    gap: 6px;
    padding: 0 8px;
    border-color: #0060e6;
    background: #0060e6;
    color: #fff;
  }

  .content {
    display: flex;
    flex: 1;
    min-height: 0;
    gap: 12px;
    padding-top: 12px;
    color: #444;
  }

  .list {
    display: grid;
    grid-template-columns: minmax(0, 1fr) 20px;
    grid-template-rows: 37px minmax(0, 1fr) 21px;
    flex: 1;
    min-width: 0;
    border: 1px solid #ddd;
    border-top-color: #c8c8c8;
    overflow: hidden;
  }

  table {
    display: flex;
    flex-direction: column;
    grid-area: 1 / 1 / 3 / 3;
    min-height: 0;
    overflow: hidden;
  }

  thead,
  tbody {
    display: block;
  }

  tbody {
    margin-right: 19px;
  }

  tr {
    display: grid;
    align-items: center;
    grid-template-columns: 39px 37px minmax(0, 1fr) 150px 64px 91px;
    height: 38px;
  }

  tbody tr:nth-child(even) {
    height: 37px;
  }

  thead tr {
    grid-template-columns: 39px 37px minmax(0, 1fr) 150px 82px 92px;
    align-items: stretch;
    height: 37px;
    border-bottom: 1px solid #c8c8c8;
    background: #e3e3e3;
  }

  th {
    padding: 0 12px;
    border-right: 1px solid #cfcfcf;
    font-weight: 400;
    line-height: 35px;
    text-align: left;
    white-space: nowrap;
    overflow: hidden;
  }

  th:last-child {
    padding-right: 0;
    border-right: 0;
  }

  .sorted {
    display: flex;
    align-items: center;
    justify-content: space-between;
  }

  .sorted .tri {
    color: #0a8bf0;
  }

  td {
    padding: 0;
    white-space: nowrap;
    overflow: hidden;
  }

  td:first-child {
    padding-left: 6px;
  }

  .star {
    display: block;
    margin: 2px 0 0 7px;
  }

  .name {
    display: flex;
    align-items: center;
    gap: 7px;
    padding-left: 14px;
  }

  .sharing,
  .owner {
    padding-left: 11px;
  }

  .owner span {
    display: block;
    width: 50px;
    overflow: hidden;
  }

  .date {
    padding-left: 10px;
  }

  .list .vscroll {
    grid-area: 2 / 2;
    margin-left: 4px;
    padding: 8px 0 6px;
  }

  .hscroll {
    display: flex;
    align-items: center;
    grid-area: 3 / 1 / 4 / 3;
    padding: 0 25px 0 6px;
  }

  .hscroll .track {
    flex: 1;
    margin: 0 8px 0 7px;
  }

  .shared {
    display: flex;
    flex-direction: column;
    width: 377px;
    border: 1px solid #c8c8c8;
  }

  h3 {
    margin: 0;
    padding-left: 10px;
    border-bottom: 1px solid #c8c8c8;
    background: #e3e3e3;
    font-size: 16px;
    font-weight: 400;
    line-height: 37px;
  }

  .shared-body {
    display: flex;
    flex: 1;
    min-height: 0;
    padding-right: 4px;
  }

  .shared ul {
    flex: 1;
    padding-top: 10px;
    overflow: hidden;
  }

  .shared li {
    display: flex;
    align-items: center;
    gap: 15px;
    height: 55px;
    padding: 0 0 11px 13px;
    line-height: 22px;
  }

  .shared li:nth-child(even) {
    height: 56px;
  }

  .shared li svg {
    margin-top: 2px;
  }

  .shared strong,
  .shared li span {
    display: block;
    min-height: 22px;
  }

  .shared strong {
    font-weight: 700;
  }

  .shared li span {
    color: #757575;
  }

  /* windows taskbar */
  .taskbar {
    display: grid;
    grid-template-columns: 1fr auto 1fr;
    align-items: center;
    flex-shrink: 0;
    height: 59px;
    padding-bottom: 1px;
    border-top: 1px solid #404040;
    background: #1c1c1c;
  }

  .stock {
    display: flex;
    align-items: center;
    gap: 10px;
    padding-left: 26px;
    line-height: 20px;
    text-align: left;
  }

  .stock-icon {
    position: relative;
    padding-top: 2px;
  }

  .stock-badge,
  .app-badge {
    position: absolute;
    width: 20px;
    height: 20px;
    border-radius: 50%;
    line-height: 20px;
    text-align: center;
  }

  .stock-badge {
    top: -13px;
    left: 13px;
    background: #ff99a4;
    color: #111;
  }

  .stock-text em {
    display: block;
    color: #6ccb5f;
    font-style: normal;
  }

  .dock {
    display: flex;
    align-items: center;
  }

  .slot {
    display: grid;
    place-items: center;
    position: relative;
    width: 55px;
    height: 50px;
  }

  .slot.current {
    width: 49px;
    margin: 0 3px;
    border: 1px solid #303030;
    border-radius: 6px;
    background: #242424;
  }

  .slot.current::after,
  .slot.running::after {
    content: "";
    position: absolute;
    bottom: 0;
    width: 8px;
    height: 4px;
    border-radius: 2px;
    background: #9a9a9a;
  }

  .slot.current::after {
    width: 14px;
    background: #4cc2ff;
  }

  .app-badge {
    top: 3px;
    right: 6px;
    background: #c42b1c;
  }

  .task-search {
    display: flex;
    align-items: center;
    gap: 12px;
    width: 275px;
    height: 40px;
    margin: 0 3px 0 4px;
    padding: 0 7px 0 14px;
    border: 1px solid #4a4a4a;
    border-radius: 20px;
    background: #3a3a3a;
  }

  .task-search input {
    flex: 1;
    min-width: 0;
    padding: 0;
    border: 0;
    outline: 0;
    background: none;
    color: #fff;
    font: inherit;
    font-size: 16px;
  }

  .task-search input::placeholder {
    color: #d0d0d0;
  }

  .tray {
    display: flex;
    align-items: center;
    justify-content: flex-end;
    padding-right: 24px;
    line-height: 20px;
  }

  .drive {
    margin: 0 21px 0 23px;
  }

  .mic {
    margin-right: 23px;
  }

  .volume {
    margin-left: 9px;
  }

  .battery {
    margin: 0 17px 0 12px;
  }

  time {
    min-width: 70px;
    text-align: right;
  }

  time span {
    display: block;
  }
</style>
